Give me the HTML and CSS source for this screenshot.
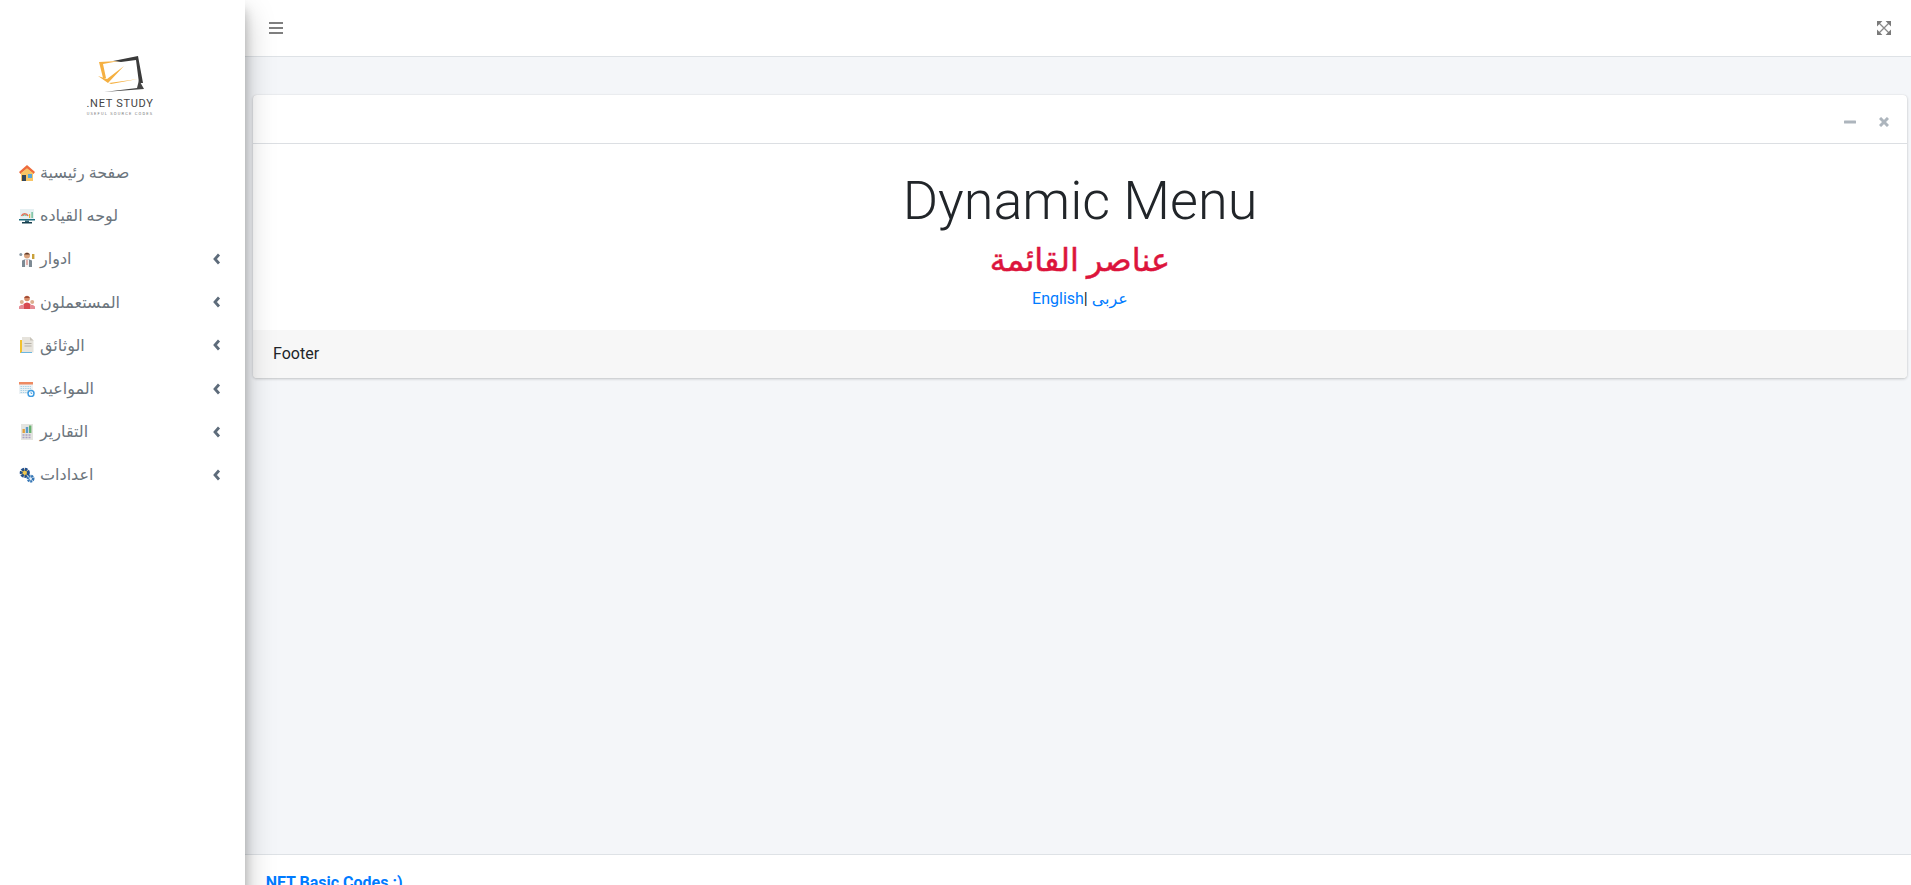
FILE: index.html
```html
<!DOCTYPE html>
<html lang="ar">
<head>
  <meta charset="UTF-8" />
  <title>Dynamic Menu | .NET Study</title>
  <link rel="stylesheet" href="styles.css">
</head>
<body>
  <div class="wrapper">
    <aside class="sidebar">
      <a class="brand" href="#">
        <svg class="brand-mark" viewBox="0 0 50 38" width="50" height="38">
          <path d="M16 6 L41 1 L46 28 L42 28 L39 5 L24 7Z" fill="#3a3a3a"/>
          <path d="M42 25 L47 34 L7 37 L40 33Z" fill="#444"/>
          <path d="M2 7 L22 6 L6 9 L9 23 L6 23Z" fill="#f5b041"/>
          <path d="M1 21 L10 24 L27 11 L11 28Z" fill="#f5b041"/>
          <path d="M12 28 L41 24 L14 29Z" fill="#f5b041"/>
        </svg>
        <span class="brand-name">.NET STUDY</span>
        <span class="brand-sub">USEFUL SOURCE CODES</span>
      </a>

      <ul class="nav">
        <li class="nav-item">
          <svg class="nav-icon" viewBox="0 0 16 16"><path d="M8 0 L16 7 L14.5 9 L8 3.5 L1.5 9 L0 7Z" fill="#ee6b3b"/><path d="M2 8 L8 3.5 L14 8 V16 H2Z" fill="#f8c565"/><rect x="3" y="10" width="4" height="6" fill="#35475a"/><rect x="9" y="9" width="4" height="4" fill="#5aa7d8"/></svg>
          <span class="nav-text">صفحة رئيسية</span>
        </li>
        <li class="nav-item">
          <svg class="nav-icon" viewBox="0 0 16 16"><rect x="1" y="1" width="14" height="10" fill="#e6f0f2"/><path d="M2.5 8 A3.5 3.5 0 0 1 9 8" fill="none" stroke="#e86f5a" stroke-width="1.6"/><path d="M4 8 A2 2 0 0 1 7.5 8" fill="none" stroke="#5bb58a" stroke-width="1"/><rect x="10" y="6" width="1.2" height="4" fill="#e5b23c"/><rect x="12.5" y="4" width="1.2" height="6" fill="#5bb58a"/><rect x="0" y="11" width="16" height="1.5" fill="#1f6f80"/><rect x="6" y="12.5" width="4" height="1.5" fill="#2e5f70"/><rect x="3" y="14" width="10" height="1.5" fill="#17404f"/></svg>
          <span class="nav-text">لوحه القياده</span>
        </li>
        <li class="nav-item">
          <svg class="nav-icon" viewBox="0 0 16 16"><circle cx="8" cy="4.5" r="3" fill="#d9a27c"/><path d="M5 3.5 Q8 0 11 3.5Z" fill="#5a3a2c"/><path d="M3 16 V9.5 Q8 7 13 9.5 V16Z" fill="#7d8a94"/><path d="M6 8.5 H10 V16 H6Z" fill="#f4f4f4"/><path d="M7.6 9 H8.4 V14 H7.6Z" fill="#c84a3c"/><circle cx="1.8" cy="3.5" r="1.5" fill="#8a9aa6"/><rect x="13" y="3" width="2.4" height="5" fill="#c9a13b"/></svg>
          <span class="nav-text">ادوار</span>
          <svg class="nav-arrow" viewBox="0 0 8 12"><path d="M6 1.5 L2 6 L6 10.5" fill="none" stroke="currentColor" stroke-width="2.8"/></svg>
        </li>
        <li class="nav-item">
          <svg class="nav-icon" viewBox="0 0 16 16"><circle cx="8" cy="4.5" r="2.8" fill="#d98e6a"/><path d="M5 4 Q8 0 11 4Z" fill="#a14a35"/><path d="M4.5 15 V10 Q8 7 11.5 10 V15Z" fill="#d8494f"/><circle cx="2.8" cy="8" r="2" fill="#dcae8f"/><path d="M0 15 V12.5 Q3 9.5 5 12 V15Z" fill="#e58a93"/><circle cx="13.2" cy="8" r="2" fill="#dcae8f"/><path d="M11 15 V12 Q13 9.5 16 12.5 V15Z" fill="#e58a93"/></svg>
          <span class="nav-text">المستعملون</span>
          <svg class="nav-arrow" viewBox="0 0 8 12"><path d="M6 1.5 L2 6 L6 10.5" fill="none" stroke="currentColor" stroke-width="2.8"/></svg>
        </li>
        <li class="nav-item">
          <svg class="nav-icon" viewBox="0 0 16 16"><rect x="1" y="3" width="11" height="13" fill="#f2c230"/><path d="M3 0 H11 L14.5 3.5 V15.5 H3Z" fill="#e6e3dc"/><path d="M11 0 L14.5 3.5 H11Z" fill="#c8c4ba"/><rect x="5.5" y="6" width="7" height="1" fill="#b6b1a7"/><rect x="5.5" y="8.5" width="7" height="1" fill="#b6b1a7"/><rect x="2" y="15" width="11" height="1" fill="#6bb6e0"/></svg>
          <span class="nav-text">الوثائق</span>
          <svg class="nav-arrow" viewBox="0 0 8 12"><path d="M6 1.5 L2 6 L6 10.5" fill="none" stroke="currentColor" stroke-width="2.8"/></svg>
        </li>
        <li class="nav-item">
          <svg class="nav-icon" viewBox="0 0 16 16"><rect x="0" y="1" width="14" height="12" fill="#edf2f5"/><rect x="0" y="1" width="14" height="2.5" fill="#ee8a62"/><path d="M1.5 5.5 H12 M1.5 7.5 H12 M1.5 9.5 H12 M1.5 11.5 H9" stroke="#a9d2e6" stroke-width="1.1" stroke-dasharray="1.5 0.8"/><circle cx="12" cy="12.5" r="3" fill="#fff" stroke="#3d9be0" stroke-width="1.5"/><path d="M12 11 V12.5 H13.2" fill="none" stroke="#3d9be0" stroke-width="0.8"/></svg>
          <span class="nav-text">المواعيد</span>
          <svg class="nav-arrow" viewBox="0 0 8 12"><path d="M6 1.5 L2 6 L6 10.5" fill="none" stroke="currentColor" stroke-width="2.8"/></svg>
        </li>
        <li class="nav-item">
          <svg class="nav-icon" viewBox="0 0 16 16"><rect x="2" y="0" width="12" height="16" fill="#e4e4e0"/><rect x="3.5" y="5" width="2.4" height="4" fill="#e2a13d"/><rect x="6.8" y="3" width="2.4" height="6" fill="#5b9bc8"/><rect x="10" y="1.5" width="2.4" height="7.5" fill="#67b26f"/><path d="M3.5 11 H12.5 M3.5 13.5 H12.5" stroke="#a9a0c2" stroke-width="1.6" stroke-dasharray="2 1"/></svg>
          <span class="nav-text">التقارير</span>
          <svg class="nav-arrow" viewBox="0 0 8 12"><path d="M6 1.5 L2 6 L6 10.5" fill="none" stroke="currentColor" stroke-width="2.8"/></svg>
        </li>
        <li class="nav-item">
          <svg class="nav-icon" viewBox="0 0 16 16"><circle cx="5.8" cy="5.8" r="3.6" fill="#f0c64a" stroke="#234f8c" stroke-width="3" stroke-dasharray="2.6 0.7"/><circle cx="11.6" cy="11.6" r="2.6" fill="#e6eef6" stroke="#3576b5" stroke-width="2.6" stroke-dasharray="1.9 0.6"/></svg>
          <span class="nav-text">اعدادات</span>
          <svg class="nav-arrow" viewBox="0 0 8 12"><path d="M6 1.5 L2 6 L6 10.5" fill="none" stroke="currentColor" stroke-width="2.8"/></svg>
        </li>
      </ul>
    </aside>

    <div class="main">
      <nav class="topbar">
        <div class="menu-toggle"><span></span><span></span><span></span></div>
        <svg class="expand" viewBox="0 0 14 14" width="14" height="14">
          <path d="M2 2 L12 12 M12 2 L2 12" stroke="#8a8a8a" stroke-width="1.3"/>
          <path d="M0 0 H5.4 L0 5.4Z M14 0 V5.4 L8.6 0Z M14 14 H8.6 L14 8.6Z M0 14 V8.6 L5.4 14Z" fill="#7a7a7a"/>
        </svg>
      </nav>

      <section class="content">
        <div class="card">
          <div class="card-header">
            <svg class="tool" viewBox="0 0 12 12" width="12" height="12"><rect x="0" y="4.5" width="12" height="3" rx="0.6" fill="#adb5bd"/></svg>
            <svg class="tool" viewBox="0 0 10 10" width="10" height="10"><path d="M1 1 L9 9 M9 1 L1 9" stroke="#adb5bd" stroke-width="3"/></svg>
          </div>
          <div class="card-body">
            <h1 class="title">Dynamic Menu</h1>
            <h2 class="subtitle">عناصر القائمة</h2>
            <div class="langs"><a href="#">English</a>| <a href="#">عربى</a></div>
          </div>
          <div class="card-footer">Footer</div>
        </div>
      </section>

      <footer class="page-footer"><a href="#">.NET Basic Codes :)</a></footer>
    </div>
  </div>
</body>
</html>
```

FILE: styles.css
```css
html, body {
  height: 100%;
  overflow: hidden;
}

body {
  font-family: Roboto, 'DejaVu Sans', sans-serif;
  background: #f4f6f9;
  color: #212529;
  font-size: 16px;
  margin: 0;
}

a {
  color: #007bff;
  text-decoration: none;
}

.wrapper {
  display: flex;
  min-height: 100%;
}

.sidebar {
  position: relative;
  z-index: 2;
  flex: 0 0 245px;
  background: #fff;
  box-shadow: 0 14px 28px rgba(0, 0, 0, .25), 0 10px 10px rgba(0, 0, 0, .22);
}

.brand {
  display: flex;
  flex-direction: column;
  align-items: center;
  padding-top: 55px;
  height: 96px;
}

.brand-mark {
  display: block;
  margin-right: 2px;
}

.brand-name {
  margin: 6px 5px 0 0;
  font-size: 11px;
  line-height: 10px;
  letter-spacing: .7px;
  color: #444;
}

.brand-sub {
  margin: 2px 5px 0 0;
  font-size: 4px;
  line-height: 6px;
  letter-spacing: 1.2px;
  color: #777;
}

.nav {
  list-style: none;
  margin: 0;
  padding: 0;
}

.nav-item {
  display: flex;
  align-items: center;
  height: 43.2px;
  padding: 0 24px 0 19px;
  color: #6c757d;
  font-size: 16px;
}

.nav-icon {
  flex: 0 0 16px;
  width: 16px;
  height: 16px;
  margin-right: 5px;
}

.nav-text {
  flex: 1;
  direction: rtl;
  unicode-bidi: plaintext;
  text-align: left;
}

.nav-arrow {
  width: 8px;
  height: 12px;
  color: #5d6b7a;
}

.main {
  flex: 1;
  min-width: 0;
  display: flex;
  flex-direction: column;
}

.topbar {
  display: flex;
  justify-content: space-between;
  align-items: center;
  height: 56px;
  padding: 0 20px 0 24px;
  background: #fff;
  border-bottom: 1px solid #dee2e6;
}

.menu-toggle {
  display: flex;
  flex-direction: column;
  gap: 3px;
  width: 14px;
}

.menu-toggle span {
  height: 2px;
  background: #7f7f7f;
}

.content {
  flex: none;
  height: 797px;
  box-sizing: border-box;
  padding: 38px 4px 0 8px;
}

.card {
  background: #fff;
  border-radius: 4px;
  box-shadow: 0 0 1px rgba(0, 0, 0, .125), 0 1px 3px rgba(0, 0, 0, .2);
}

.card-header {
  display: flex;
  justify-content: flex-end;
  align-items: center;
  gap: 23px;
  height: 48px;
  padding: 0 18px;
  border-bottom: 1px solid #dcdfe3;
}

.tool {
  margin-top: 5px;
}

.card-body {
  text-align: center;
  padding: 23px 20px 19px;
}

.title {
  margin: 0;
  font-size: 54px;
  font-weight: 300;
  line-height: 67px;
}

.subtitle {
  margin: 6px 0 0;
  color: #dc143c;
  font-size: 32px;
  font-weight: 400;
  line-height: 40px;
  -webkit-text-stroke: .5px #dc143c;
}

.langs {
  margin-top: 7px;
  line-height: 24px;
}

.card-footer {
  background: #f7f7f7;
  padding: 12px 20px;
  line-height: 24px;
  border-radius: 0 0 4px 4px;
}

.page-footer {
  background: #fff;
  border-top: 1px solid #dee2e6;
  padding: 16px;
  font-weight: 700;
  line-height: 24px;
}
```
